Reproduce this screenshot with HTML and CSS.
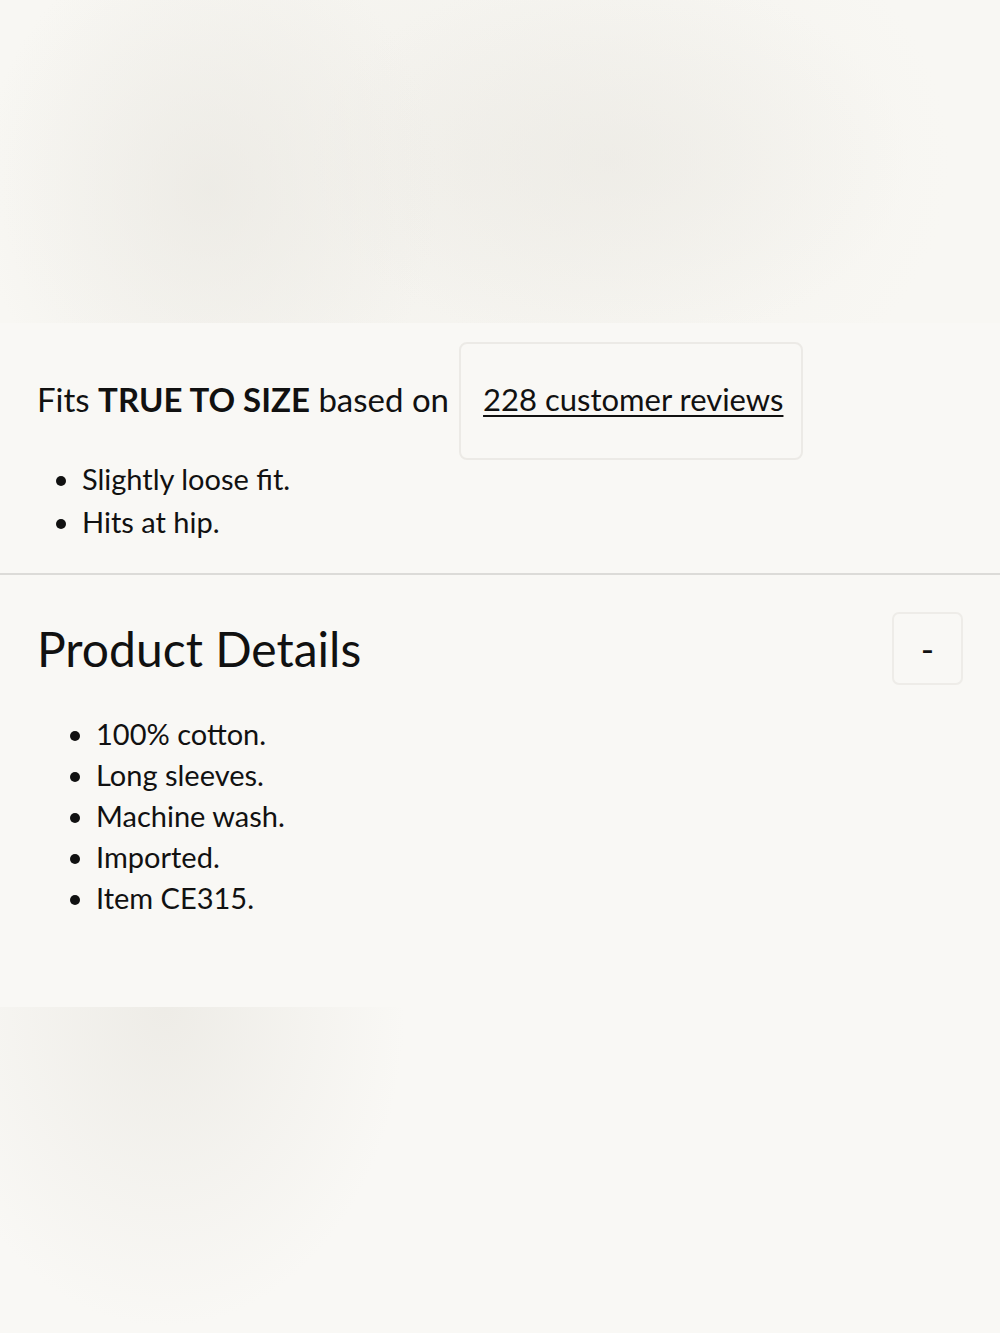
FILE: index.html
```html
<!doctype html>
<html lang="en">
<head>
  <meta charset="utf-8">
  <title>Product fit and details</title>
  <link rel="stylesheet" href="styles.css">
</head>
<body class="page">
  <div class="media media-top"></div>

  <section class="fit">
    <div class="fit-row">
      <p class="fit-text">Fits <strong>TRUE TO SIZE</strong> based on</p>
      <div class="review-box">
        <a class="review-link" href="#reviews">228 customer reviews</a>
      </div>
    </div>
    <ul class="fit-list">
      <li>Slightly loose fit.</li>
      <li>Hits at hip.</li>
    </ul>
  </section>

  <section class="details">
    <div class="details-head">
      <h2 class="details-title">Product Details</h2>
      <button class="toggle" type="button">-</button>
    </div>
    <ul class="details-list">
      <li>100% cotton.</li>
      <li>Long sleeves.</li>
      <li>Machine wash.</li>
      <li>Imported.</li>
      <li>Item CE315.</li>
    </ul>
  </section>

  <div class="media media-bottom"></div>
</body>
</html>
```

FILE: styles.css
```css
.page {
  margin: 0;
  padding: 0;
  background-color: #f9f8f5;
  color: #111111;
  font-family: 'Lato', sans-serif;
}

.media {
  width: 100%;
}

.media-top {
  height: 323px;
  background:
    radial-gradient(ellipse 230px 260px at 210px 190px, rgba(234,232,226,0.7), rgba(234,232,226,0) 100%),
    radial-gradient(ellipse 300px 190px at 610px 160px, rgba(234,232,226,0.55), rgba(234,232,226,0) 100%),
    radial-gradient(ellipse 480px 330px at 470px 160px, rgba(238,236,230,0.55), rgba(238,236,230,0) 100%),
    #f8f7f3;
}

.media-bottom {
  height: 325px;
  background:
    radial-gradient(ellipse 240px 320px at 165px 0px, rgba(234,232,226,0.75), rgba(234,232,226,0) 100%),
    #f9f8f5;
}

.fit {
  padding: 19px 37px 30px;
  border-bottom: 2px solid #dcdbd8;
}

.fit-row {
  display: flex;
  flex-direction: row;
  align-items: center;
  gap: 10px;
}

.fit-text {
  margin: 0 0 4px;
  font-size: 33px;
}

.fit-text strong {
  font-weight: 700;
}

.review-box {
  padding: 36px 18px 40px 22px;
  border: 2px solid #eceae6;
  border-radius: 8px;
}

.review-link {
  color: #111111;
  font-size: 31px;
  line-height: 38px;
  text-decoration: underline;
  text-underline-offset: 4px;
  text-decoration-thickness: 2px;
}

.fit-list {
  margin: -3px 0 0;
  padding: 0 0 0 45px;
  font-size: 29px;
  line-height: 43px;
}

.details {
  padding: 37px 37px 89px;
}

.details-head {
  display: flex;
  flex-direction: row;
  align-items: center;
  justify-content: space-between;
}

.details-title {
  margin: 0;
  font-size: 48px;
  font-weight: 400;
}

.toggle {
  width: 71px;
  height: 73px;
  border: 2px solid #eeece8;
  border-radius: 7px;
  background: transparent;
  color: #111111;
  font-family: 'Lato', sans-serif;
  font-size: 36px;
}

.details-list {
  margin: 28px 0 0;
  padding: 0 0 0 59px;
  font-size: 29px;
  line-height: 41px;
}
```
